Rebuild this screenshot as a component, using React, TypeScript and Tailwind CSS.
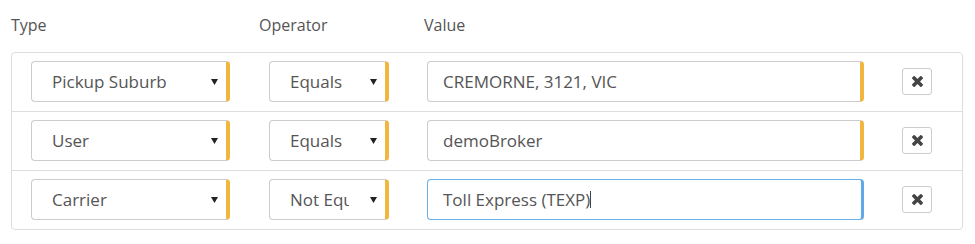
import React from "react";

const font = { fontFamily: '"Open Sans", "Liberation Sans", sans-serif' };

function Arrow() {
  return (
    <svg width="7" height="6" viewBox="0 0 7 6" className="shrink-0">
      <path d="M0 0 L7 0 L3.5 6 Z" fill="#222" />
    </svg>
  );
}

function Select({ text, width, textWidth }: { text: string; width: string; textWidth: string }) {
  return (
    <div
      className={`${width} h-[41px] shrink-0 flex items-center bg-white border border-[#ccc] border-r-[4px] border-r-[#f0b63e] rounded-[4px] pl-[20px] pr-[8px]`}
    >
      <div className={`${textWidth} overflow-hidden whitespace-nowrap text-[17px] text-[#555]`}>{text}</div>
      <div className="flex-1" />
      <Arrow />
    </div>
  );
}

function ValueInput({ text, focused }: { text: string; focused?: boolean }) {
  return (
    <div
      className={
        focused
          ? "w-[437px] h-[41px] shrink-0 flex items-center bg-white border border-[#66afe9] border-r-[3px] border-r-[#5fa9e6] rounded-[4px] pl-[15px] text-[17px] text-[#555]"
          : "w-[437px] h-[41px] shrink-0 flex items-center bg-white border border-[#ccc] border-r-[4px] border-r-[#f0b63e] rounded-[4px] pl-[15px] text-[17px] text-[#555]"
      }
    >
      <span className="whitespace-nowrap">{text}</span>
      {focused && <span className="inline-block w-[1px] h-[17px] bg-[#444]" />}
    </div>
  );
}

function RemoveButton() {
  return (
    <div className="w-[30px] h-[27px] shrink-0 flex items-center justify-center bg-white border border-[#ccc] rounded-[3px]">
      <svg width="11" height="11" viewBox="110 366 1188 1188">
        <path
          fill="#444"
          d="M1298 1322q0 40-28 68l-136 136q-28 28-68 28t-68-28l-294-294-294 294q-28 28-68 28t-68-28l-136-136q-28-28-28-68t28-68l294-294-294-294q-28-28-28-68t28-68l136-136q28-28 68-28t68 28l294 294 294-294q28-28 68-28t68 28l136 136q28 28 28 68t-28 68l-294 294 294 294q28 28 28 68z"
        />
      </svg>
    </div>
  );
}

function Row({
  type,
  op,
  value,
  focused,
  first,
}: {
  type: string;
  op: string;
  value: string;
  focused?: boolean;
  first?: boolean;
}) {
  return (
    <div className={`flex items-center pl-[19px] pt-[8px] pb-[9px] ${first ? "" : "border-t border-[#ddd]"}`}>
      <Select text={type} width="w-[199px]" textWidth="w-[150px]" />
      <div className="w-[39px] shrink-0" />
      <Select text={op} width="w-[120px]" textWidth="w-[59px]" />
      <div className="w-[38px] shrink-0" />
      <ValueInput text={value} focused={focused} />
      <div className="w-[38px] shrink-0" />
      <RemoveButton />
    </div>
  );
}

export default function App() {
  return (
    <div className="w-[975px] h-[244px] bg-white overflow-hidden" style={font}>
      <div className="flex pt-[13px] pl-[11px] text-[16px] leading-[24px] text-[#555]">
        <div className="w-[248px]">Type</div>
        <div className="w-[165px]">Operator</div>
        <div>Value</div>
      </div>
      <div className="ml-[11px] mt-[15px] w-[952px] border border-[#ddd] rounded-[4px]">
        <Row type="Pickup Suburb" op="Equals" value="CREMORNE, 3121, VIC" first />
        <Row type="User" op="Equals" value="demoBroker" />
        <Row type="Carrier" op="Not Equals" value="Toll Express (TEXP)" focused />
      </div>
    </div>
  );
}
